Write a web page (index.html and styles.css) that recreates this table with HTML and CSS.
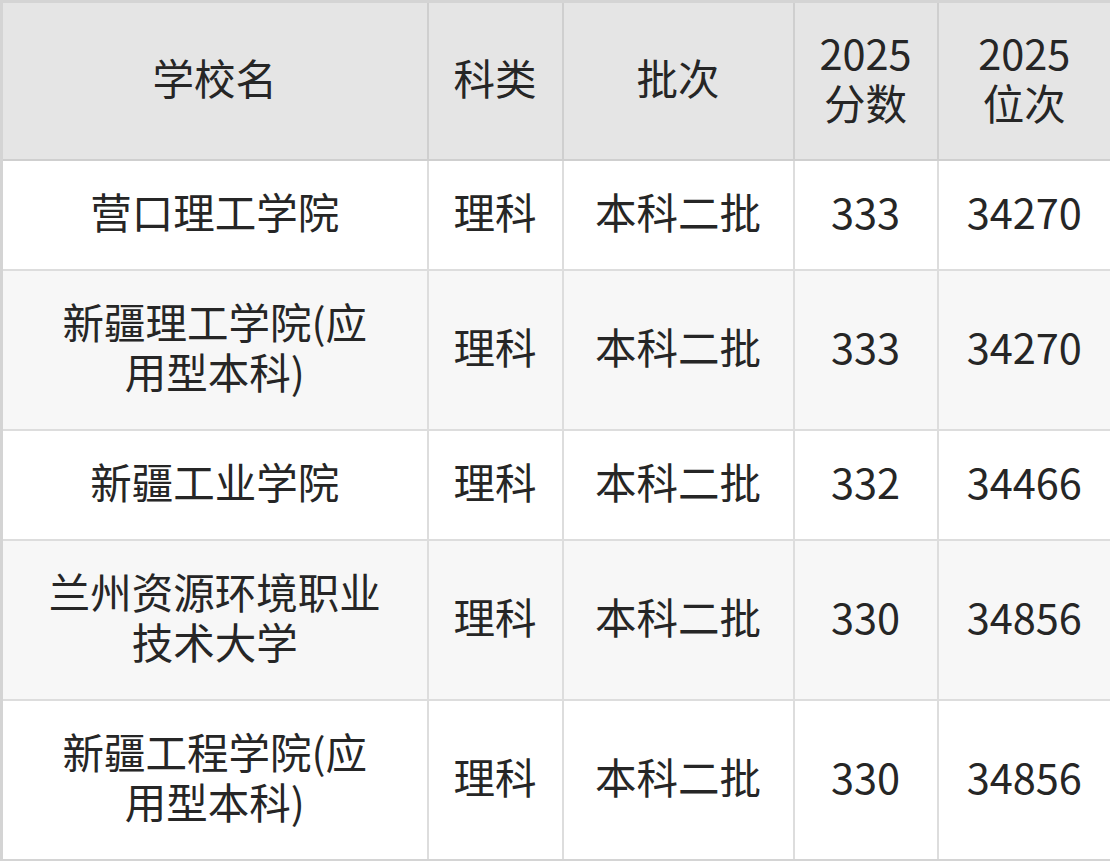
FILE: index.html
```html
<!DOCTYPE html>
<html lang="zh-CN">
<head>
<meta charset="utf-8">
<title>分数线</title>
<link rel="stylesheet" href="styles.css">
</head>
<body>
<table class="score-table">
  <colgroup>
    <col class="c-school">
    <col class="c-type">
    <col class="c-batch">
    <col class="c-score">
    <col class="c-rank">
  </colgroup>
  <thead>
    <tr>
      <th>学校名</th>
      <th>科类</th>
      <th>批次</th>
      <th>2025<br>分数</th>
      <th>2025<br>位次</th>
    </tr>
  </thead>
  <tbody>
    <tr>
      <td>营口理工学院</td>
      <td>理科</td>
      <td>本科二批</td>
      <td>333</td>
      <td>34270</td>
    </tr>
    <tr>
      <td>新疆理工学院(应<br>用型本科)</td>
      <td>理科</td>
      <td>本科二批</td>
      <td>333</td>
      <td>34270</td>
    </tr>
    <tr>
      <td>新疆工业学院</td>
      <td>理科</td>
      <td>本科二批</td>
      <td>332</td>
      <td>34466</td>
    </tr>
    <tr>
      <td>兰州资源环境职业<br>技术大学</td>
      <td>理科</td>
      <td>本科二批</td>
      <td>330</td>
      <td>34856</td>
    </tr>
    <tr>
      <td>新疆工程学院(应<br>用型本科)</td>
      <td>理科</td>
      <td>本科二批</td>
      <td>330</td>
      <td>34856</td>
    </tr>
  </tbody>
</table>
</body>
</html>
```

FILE: styles.css
```css
html, body {
  margin: 0;
  padding: 0;
  background: #ffffff;
}

.score-table {
  width: 1110px;
  table-layout: fixed;
  border-collapse: collapse;
  border: 3px solid #d4d4d4;
  font-family: "Noto Sans CJK SC", sans-serif;
  font-size: 41.5px;
  line-height: 50px;
  color: #262626;
}

.c-school { width: 426px; }
.c-type { width: 135px; }
.c-batch { width: 231px; }
.c-score { width: 144px; }
.c-rank { width: 174px; }

.score-table th {
  font-weight: normal;
  background: #e5e5e5;
  border: 2px solid #cfcfcf;
  padding: 24px 0 32px;
  text-align: center;
  vertical-align: middle;
}

.score-table td {
  border: 2px solid #dddddd;
  padding: 25px 0 33px;
  text-align: center;
  vertical-align: middle;
}

.score-table tbody tr:nth-child(even) td {
  background: #f7f7f7;
}
```
